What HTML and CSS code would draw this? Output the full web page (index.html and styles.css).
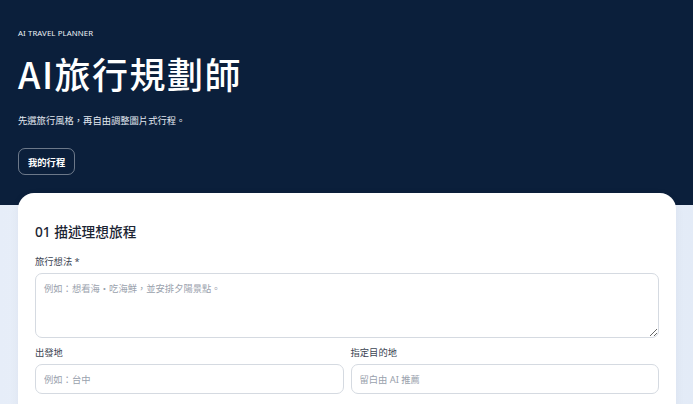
FILE: index.html
```html
<!DOCTYPE html>
<html lang="zh-Hant">
<head>
    <meta charset="UTF-8">
    <meta name="viewport" content="width=device-width, initial-scale=1.0">
    <title>AI旅行規劃師</title>
    <link rel="stylesheet" href="styles.css">
</head>
<body>
    <header class="hero">
        <p class="hero-kicker">AI Travel Planner</p>
        <h1 class="hero-title">AI旅行規劃師</h1>
        <p class="hero-subtitle">先選旅行風格，再自由調整圖片式行程。</p>
        <button class="btn-outline" type="button">我的行程</button>
    </header>

    <main class="content">
        <section class="card">
            <h2 class="card-title">01 描述理想旅程</h2>

            <label class="field-label" for="idea">旅行想法 *</label>
            <textarea id="idea" class="field-textarea" placeholder="例如：想看海・吃海鮮，並安排夕陽景點。"></textarea>

            <div class="field-row">
                <div class="field">
                    <label class="field-label" for="origin">出發地</label>
                    <input id="origin" class="field-input" type="text" placeholder="例如：台中">
                </div>
                <div class="field">
                    <label class="field-label" for="dest">指定目的地</label>
                    <input id="dest" class="field-input" type="text" placeholder="留白由 AI 推薦">
                </div>
            </div>
        </section>
    </main>
</body>
</html>
```

FILE: styles.css
```css
body {
    margin: 0;
    font-family: "Noto Sans", "Noto Sans CJK TC", sans-serif;
    background: linear-gradient(90deg, #e6edf8 0%, #f1f5fb 40%, #e3ebf7 100%);
    color: #1e293b;
    min-height: 100vh;
}

/* Hero header */
.hero {
    background-color: #0b1f3b;
    color: #ffffff;
    padding: 28px 18px 30px;
}

.hero-kicker {
    margin: 0;
    font-size: 7.8px;
    line-height: 10px;
    text-transform: uppercase;
    letter-spacing: 0.1px;
    color: #eef2f7;
}

.hero-title {
    margin: 12px 0 0;
    font-family: "Noto Sans CJK TC", "Noto Sans", sans-serif;
    font-size: 36px;
    line-height: 46px;
    font-weight: 500;
    letter-spacing: 1.5px;
}

.hero-subtitle {
    margin: 18px 0 0;
    font-size: 9.3px;
    line-height: 14px;
    color: #e3e9f1;
}

.btn-outline {
    display: block;
    margin-top: 20px;
    height: 27px;
    padding: 0 9px;
    font-family: inherit;
    font-size: 9.3px;
    font-weight: 700;
    color: #ffffff;
    background: transparent;
    border: 1px solid rgba(255, 255, 255, 0.4);
    border-radius: 7px;
}

/* Main content */
.content {
    padding: 0 17px 0 18px;
    margin-top: -12px;
}

.card {
    background: #ffffff;
    border-radius: 16px 16px 0 0;
    padding: 29px 17px 20px;
    box-shadow: 0 2px 10px rgba(11, 31, 59, 0.05);
}

.card-title {
    margin: 0;
    font-size: 13.7px;
    line-height: 20px;
    font-weight: 500;
    color: #1b2433;
}

.field-label {
    display: block;
    font-size: 9.3px;
    line-height: 14px;
    color: #3b4452;
}

.card-title + .field-label {
    margin-top: 13px;
}

.field-textarea,
.field-input {
    display: block;
    width: 100%;
    box-sizing: border-box;
    margin-top: 4px;
    font-family: inherit;
    font-size: 9.3px;
    color: #1e293b;
    background: #ffffff;
    border: 1px solid #d5dae1;
    border-radius: 7px;
}

.field-textarea {
    height: 65px;
    padding: 8px 8px;
    line-height: 14px;
    resize: vertical;
}

.field-input {
    height: 30px;
    padding: 0 8px;
}

.field-textarea::placeholder,
.field-input::placeholder {
    color: #9aa2ad;
}

.field-row {
    display: grid;
    grid-template-columns: 1fr 1fr;
    gap: 7px;
    margin-top: 8px;
}
```
